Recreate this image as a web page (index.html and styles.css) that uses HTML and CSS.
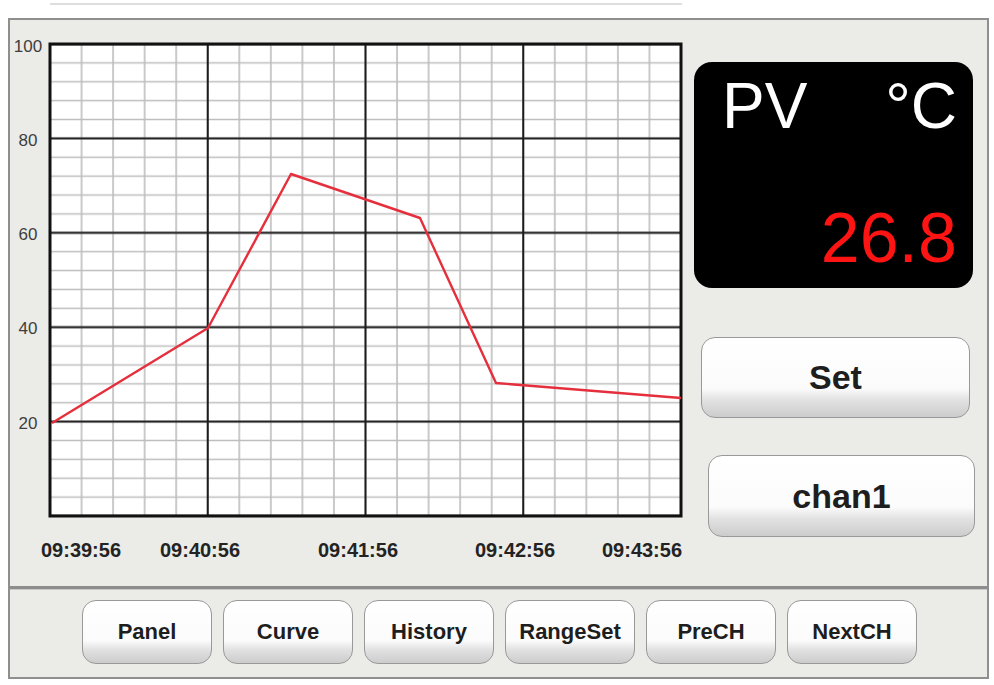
FILE: index.html
```html
<!DOCTYPE html>
<html lang="en">
<head>
    <meta charset="UTF-8">
    <title>Curve</title>
    <link rel="stylesheet" href="styles.css">
</head>
<body>

    <div class="top-strip"></div>

    <div class="device">
        <div class="main">
            <!-- trend chart, coordinates are page pixels -->
            <svg class="chart" viewBox="10 20 680 566">
                <defs>
                    <pattern id="minor" patternUnits="userSpaceOnUse" x="34.225" y="34.56" width="31.55" height="18.88">
                        <path d="M15.775 0 V18.88 M0 9.44 H31.55" class="grid-minor"/>
                    </pattern>
                    <pattern id="major" patternUnits="userSpaceOnUse" x="-28.875" y="-3.2" width="157.75" height="94.4">
                        <path d="M78.875 0 V94.4 M0 47.2 H157.75" class="grid-major"/>
                    </pattern>
                </defs>

                <rect x="50" y="44" width="631" height="472" fill="#fff"/>
                <rect x="50" y="44" width="631" height="472" fill="url(#minor)"/>
                <rect x="50" y="44" width="631" height="472" fill="url(#major)"/>
                <rect x="50" y="44" width="631" height="472" class="plot-border"/>

                <polyline class="trend" points="52,423 208,328 291,174 420,218 496,383 681,398"/>

                <g class="y-labels">
                    <text x="28" y="48">100</text>
                    <text x="28" y="142">80</text>
                    <text x="28" y="236">60</text>
                    <text x="28" y="330">40</text>
                    <text x="28" y="425">20</text>
                </g>

                <g class="x-labels">
                    <text x="81" y="557">09:39:56</text>
                    <text x="200" y="557">09:40:56</text>
                    <text x="358" y="557">09:41:56</text>
                    <text x="515" y="557">09:42:56</text>
                    <text x="642" y="557">09:43:56</text>
                </g>
            </svg>

            <div class="side">
                <div class="pv-box">
                    <div class="pv-head">
                        <span>PV</span>
                        <span>°C</span>
                    </div>
                    <div class="pv-value">26.8</div>
                </div>

                <button class="btn side-btn set-btn">Set</button>
                <button class="btn side-btn chan-btn">chan1</button>
            </div>
        </div>

        <div class="toolbar">
            <button class="btn tool-btn">Panel</button>
            <button class="btn tool-btn">Curve</button>
            <button class="btn tool-btn">History</button>
            <button class="btn tool-btn">RangeSet</button>
            <button class="btn tool-btn">PreCH</button>
            <button class="btn tool-btn">NextCH</button>
        </div>
    </div>

</body>
</html>
```
FILE: styles.css
```css
body {
    margin: 0;
    background: #ffffff;
    font-family: "Liberation Sans", Arial, sans-serif;
}

.top-strip {
    width: 632px;
    height: 2px;
    margin: 3px 0 0 50px;
    background: #dedede;
}

.device {
    box-sizing: border-box;
    width: 981px;
    height: 661px;
    margin: 13px 0 0 8px;
    border: 2px solid #8f8f8f;
    background: #ebebe8;
    display: flex;
    flex-direction: column;
}

.main {
    display: flex;
    height: 566px;
}

/* chart */
.chart {
    display: block;
    flex: none;
    width: 680px;
    height: 566px;
}

.grid-minor {
    stroke: #bdbdbd;
    stroke-width: 1.6;
    fill: none;
}

.grid-major {
    stroke: #1c1c1c;
    stroke-width: 2;
    fill: none;
}

.plot-border {
    fill: none;
    stroke: #111111;
    stroke-width: 3;
}

.trend {
    fill: none;
    stroke: #e62f3c;
    stroke-width: 2.4;
    stroke-linejoin: round;
}

.y-labels text {
    font-size: 17px;
    fill: #3e3e3e;
    text-anchor: middle;
    dominant-baseline: middle;
}

.x-labels text {
    font-size: 20px;
    font-weight: bold;
    fill: #232323;
    text-anchor: middle;
}

/* right column */
.side {
    flex: 1;
    display: flex;
    flex-direction: column;
    align-items: flex-start;
}

.pv-box {
    box-sizing: border-box;
    width: 279px;
    height: 226px;
    margin: 42px 0 0 4px;
    padding: 12px 16px 15px 28px;
    background: #000000;
    border-radius: 18px;
    display: flex;
    flex-direction: column;
    justify-content: space-between;
}

.pv-head {
    display: flex;
    justify-content: space-between;
    color: #ffffff;
    font-size: 64px;
    line-height: 1;
}

.pv-value {
    color: #ff1414;
    font-size: 70px;
    line-height: 1;
    text-align: right;
}

/* buttons */
.btn {
    box-sizing: border-box;
    padding: 0;
    border: 1.5px solid #999999;
    border-radius: 14px;
    background: linear-gradient(to bottom, #ffffff 0%, #fbfbfb 64%, #e2e2e2 78%, #cccccc 100%);
    box-shadow: inset 0 1px 0 #ffffff;
    font-family: inherit;
    font-weight: bold;
    color: #1e1e1e;
    cursor: pointer;
}

.side-btn {
    height: 81px;
    font-size: 34px;
}

.set-btn {
    width: 269px;
    margin: 49px 0 0 11px;
}

.chan-btn {
    width: 267px;
    height: 82px;
    margin: 37px 0 0 18px;
}

.toolbar {
    flex: 1;
    display: flex;
    gap: 11px;
    padding: 11px 0 0 72px;
    border-top: 3px solid #8d8d8d;
    box-shadow: inset 0 1px 0 #c9c9c9;
}

.tool-btn {
    width: 130px;
    height: 64px;
    font-size: 22px;
}
```
